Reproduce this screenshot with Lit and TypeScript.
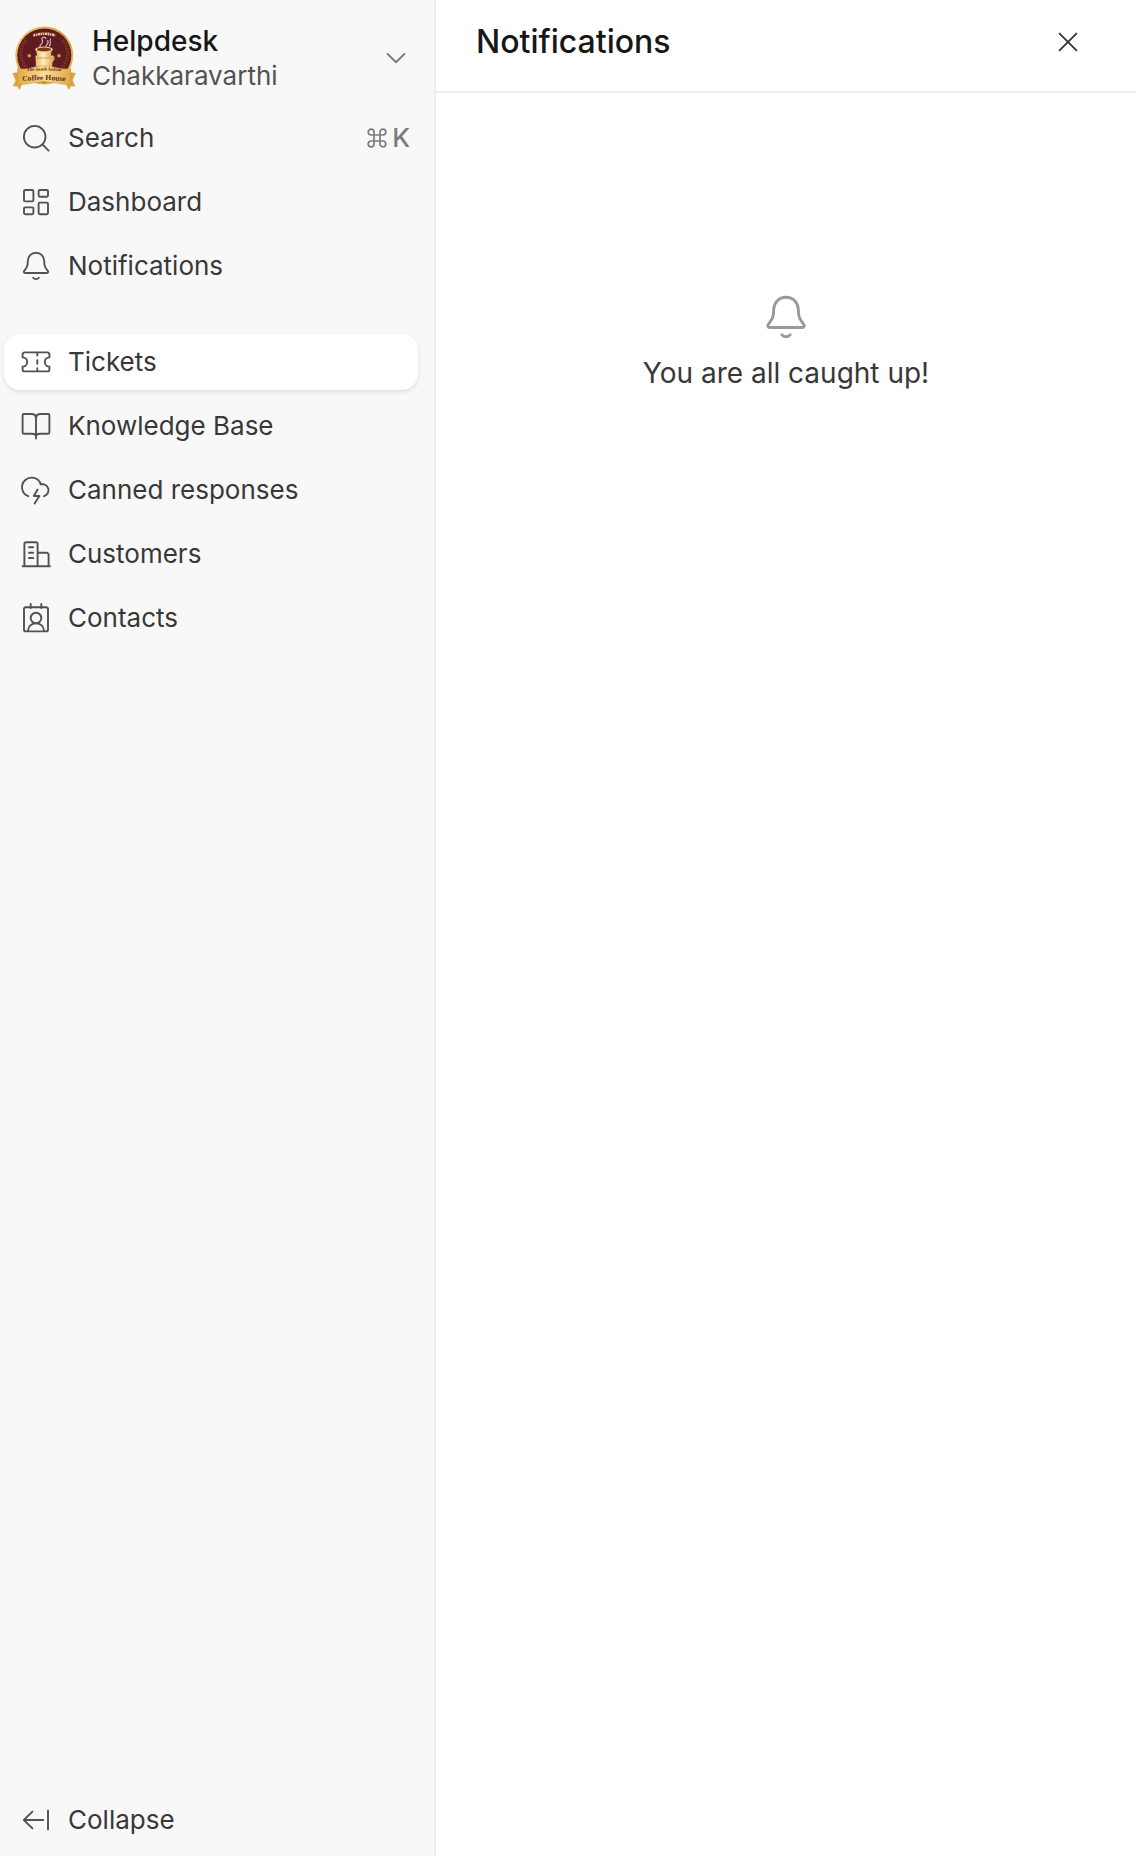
import { LitElement, html, svg, css, SVGTemplateResult } from "lit";
import { customElement, property } from "lit/decorators.js";

const icons: Record<string, SVGTemplateResult> = {
  search: svg`<circle cx="14.7" cy="14.7" r="10.8"/><path d="M22.4 22.4 28.6 28.6"/>`,
  dashboard: svg`<rect x="4" y="4" width="9.4" height="11.4" rx="1.2"/><rect x="18.6" y="4" width="9.4" height="6.8" rx="1.2"/><rect x="4" y="21.4" width="9.4" height="6.8" rx="1.2"/><rect x="18.6" y="16.6" width="9.4" height="11.6" rx="1.2"/>`,
  bell: svg`<path d="M16 2.8C11.2 2.8 8 6.3 7.8 11L7.6 14.2C7.4 17.2 6 18.6 4.6 20.3C3.3 21.8 3.9 23 5.2 23H26.8C28.1 23 28.7 21.8 27.4 20.3C26 18.6 24.6 17.2 24.4 14.2L24.2 11C24 6.3 20.8 2.8 16 2.8Z"/><path d="M13.2 27.8C14.4 29.6 17.6 29.6 18.8 27.8"/>`,
  ticket: svg`<path d="M4.6 6.4H27.4A2 2 0 0 1 29.4 8.4V11.4A4.6 4.6 0 0 0 29.4 20.6V23.4A2 2 0 0 1 27.4 25.4H4.6A2 2 0 0 1 2.6 23.4V20.6A4.6 4.6 0 0 0 2.6 11.4V8.4A2 2 0 0 1 4.6 6.4Z"/><path d="M17.3 7V9.6M17.3 14.2V17.8M17.3 22.2V24.8"/>`,
  book: svg`<path d="M16 28.6V8.4C16 5.6 14 4 11.4 4H4A1.4 1.4 0 0 0 2.6 5.4V22.4A1.4 1.4 0 0 0 4 23.8H11.8C14.2 23.8 16 24.6 16 26.6C16 24.6 17.8 23.8 20.2 23.8H28A1.4 1.4 0 0 0 29.4 22.4V5.4A1.4 1.4 0 0 0 28 4H20.6C18 4 16 5.6 16 8.4"/>`,
  cloud: svg`<path d="M8.2 22.2A9.6 9.6 0 1 1 20.8 10.4A6 6 0 0 1 24 22.2M20.6 10.4H23.6"/><path d="M17.6 15.6 13.8 22H19.4L14.6 29.4"/>`,
  building: svg`<path d="M2.6 28.2H30"/><path d="M4.4 28V6A1.8 1.8 0 0 1 6.2 4.2H15.8A1.8 1.8 0 0 1 17.6 6V28M17.6 14.8H26.6A2 2 0 0 1 28.6 16.8V28M9 9.3H13.2M9 14.7H13.2M9 20H13.2"/>`,
  contact: svg`<rect x="4" y="5.2" width="24" height="24.2" rx="2"/><path d="M10.7 2V6M21.3 2V6"/><circle cx="16" cy="16" r="5.3"/><path d="M8 28.8C8.4 24.4 11.4 21.4 16 21.4S23.6 24.4 24 28.8"/>`,
  collapse: svg`<path d="M23.2 16H3.8M12.4 7.6 3.8 16 12.4 24.4M28 6.4V25.6"/>`,
  chevron: svg`<path d="M7.6 12 16 20.2 24.4 12"/>`,
  close: svg`<path d="M7.6 7.6 24.4 24.4M24.4 7.6 7.6 24.4"/>`,
  command: svg`<path stroke-width="1.7" d="M14 13H20V19H14ZM14 13H11.1A2.9 2.9 0 1 1 14 10.1ZM20 13V10.1A2.9 2.9 0 1 1 22.9 13ZM20 19H22.9A2.9 2.9 0 1 1 20 21.9ZM14 19V21.9A2.9 2.9 0 1 1 11.1 19Z"/>`,
};

@customElement("line-icon")
export class LineIcon extends LitElement {
  @property() name = "";

  static styles = css`
    :host {
      display: block;
      flex: none;
      width: 32px;
      height: 32px;
    }
    .glyph {
      display: block;
      width: 100%;
      height: 100%;
      fill: none;
      stroke: currentColor;
      stroke-width: 1.9;
      stroke-linecap: round;
      stroke-linejoin: round;
    }
  `;

  render() {
    return html`<svg class="glyph" viewBox="0 0 32 32" aria-hidden="true">${icons[this.name]}</svg>`;
  }
}

@customElement("coffee-logo")
export class CoffeeLogo extends LitElement {
  static styles = css`
    :host {
      display: block;
      flex: none;
      width: 64px;
      height: 64px;
    }
    .art {
      display: block;
      width: 100%;
      height: 100%;
      overflow: visible;
    }
    .word {
      font-family: "Liberation Serif", serif;
      font-weight: 700;
      text-anchor: middle;
    }
  `;

  render() {
    return html`
      <svg class="art" viewBox="0 0 64 64" aria-hidden="true">
        <defs>
          <linearGradient id="gold" x1="0" y1="0" x2="1" y2="1">
            <stop offset="0" stop-color="#f6d878" />
            <stop offset="0.5" stop-color="#d09a3c" />
            <stop offset="1" stop-color="#f2cf6c" />
          </linearGradient>
          <linearGradient id="band" x1="0" y1="0" x2="1" y2="0">
            <stop offset="0" stop-color="#e2aa48" />
            <stop offset="0.5" stop-color="#f8df94" />
            <stop offset="1" stop-color="#e2aa48" />
          </linearGradient>
          <linearGradient id="cup" x1="0" y1="0" x2="1" y2="0">
            <stop offset="0" stop-color="#e4b866" />
            <stop offset="0.45" stop-color="#fff0c0" />
            <stop offset="1" stop-color="#d9a558" />
          </linearGradient>
          <path id="name-arc" d="M8 45.4Q32 43.8 56 45.4" />
          <path id="house-arc" d="M4 56Q32 52.2 60 56" />
        </defs>
        <circle cx="32.3" cy="29.4" r="29" fill="url(#gold)" />
        <circle cx="32.3" cy="29.4" r="27" fill="#5f1a22" />
        <path d="M14 14C6.5 23 7.5 35 15 42M50.6 14C58 23 57 35 49.6 42" fill="none" stroke="#7a3222" stroke-width="3.4" stroke-dasharray="2 1" />
        <path d="M21.4 9.6Q32.3 5.8 43.2 9.6" fill="none" stroke="#e6cb93" stroke-width="2.6" stroke-dasharray="1.8 0.6 1.2 0.7 2.4 0.5" />
        <path d="M29 22C25 19 33 18 30 13.5C29 11.4 33 10 34 12.6M34 22C32 19 38 18 35.6 14.6M37.2 20C40 17.6 36.8 15 38.6 13" fill="none" stroke="#d9c0bd" stroke-width="1.1" stroke-linecap="round" />
        <circle cx="17.3" cy="29.8" r="1.8" fill="#d39a42" />
        <circle cx="47" cy="29.8" r="1.8" fill="#d39a42" />
        <path d="M23.4 29.6H41.4L40 41H24Z" fill="url(#cup)" />
        <path d="M39.6 30.4Q42.6 30 41.8 33.4Q41.4 35.4 38.8 35.4" fill="none" stroke="#e4bd72" stroke-width="1.2" />
        <path d="M24 23.5H40L38.4 32H25.6Z" fill="url(#cup)" />
        <path d="M25 32H39" stroke="#c98e43" stroke-width="0.8" />
        <ellipse cx="32" cy="23.4" rx="9" ry="2.8" fill="#efce84" />
        <ellipse cx="32" cy="23.4" rx="7.2" ry="1.8" fill="#7b3518" />
        <path d="M0.4 47L10 45.8V58.4L7.6 64L5.4 60.4L0.8 60L3.6 54.5Z" fill="#dba544" />
        <path d="M63.8 47L54.2 45.8V58.4L56.6 64L58.8 60.4L63.4 60L60.6 54.5Z" fill="#dba544" />
        <path d="M5.6 42.4Q13 44 20 41.6Q32 38 44 41.6Q51 44 58.6 42.4V58.4Q50 58.8 43 56.8Q32 54.6 21 56.8Q14 58.8 5.6 58.4Z" fill="url(#band)" stroke="#c88c33" stroke-width="0.5" />
        <text class="word" font-size="4.6" fill="#6a2320"><textPath href="#name-arc" startOffset="50%">The South Indian</textPath></text>
        <text class="word" font-size="7.6" fill="#6a2320"><textPath href="#house-arc" startOffset="50%">Coffee House</textPath></text>
      </svg>
    `;
  }
}

interface NavItem {
  icon: string;
  label: string;
  active?: boolean;
}

const views: NavItem[] = [
  { icon: "ticket", label: "Tickets", active: true },
  { icon: "book", label: "Knowledge Base" },
  { icon: "cloud", label: "Canned responses" },
  { icon: "building", label: "Customers" },
  { icon: "contact", label: "Contacts" },
];

@customElement("app-root")
export class AppRoot extends LitElement {
  static styles = css`
    :host {
      display: flex;
      min-height: 100vh;
      background: #ffffff;
      color: #383838;
      font-family: Inter, "Liberation Sans", sans-serif;
      font-size: 26px;
      line-height: 32px;
    }
    * {
      box-sizing: border-box;
    }
    button {
      margin: 0;
      border: 0;
      background: none;
      color: inherit;
      font: inherit;
      text-align: left;
      cursor: pointer;
    }
    .sidebar {
      display: flex;
      flex: none;
      flex-direction: column;
      width: 436px;
      padding: 16px 16px 8px 4px;
      border-right: 2px solid #ededed;
      background: #f8f8f8;
    }
    .account {
      display: flex;
      align-items: center;
      gap: 16px;
      height: 84px;
      padding: 0 6px 0 8px;
      margin-bottom: 10px;
    }
    .names {
      display: flex;
      flex: 1;
      flex-direction: column;
      gap: 3px;
      min-width: 0;
    }
    .product {
      color: #171717;
      font-size: 28px;
      font-weight: 500;
    }
    .user {
      color: #525252;
    }
    .muted {
      color: #7c7c7c;
    }
    .group {
      display: flex;
      flex-direction: column;
      gap: 8px;
    }
    .views {
      margin-top: 40px;
    }
    .item {
      display: flex;
      align-items: center;
      gap: 16px;
      width: 100%;
      height: 56px;
      padding: 0 8px 0 16px;
      border-radius: 16px;
      color: #383838;
      text-decoration: none;
    }
    .item line-icon {
      color: #525252;
    }
    .active {
      background: #ffffff;
      box-shadow: 0 2px 4px rgba(0, 0, 0, 0.1);
    }
    .label {
      flex: 1;
    }
    .shortcut {
      display: flex;
      align-items: center;
      color: #7c7c7c;
      font-weight: 500;
    }
    .item .shortcut line-icon {
      color: #7c7c7c;
    }
    .foot {
      margin-top: auto;
    }
    .panel {
      display: flex;
      flex: 1;
      flex-direction: column;
      min-width: 0;
    }
    .panel-head {
      display: flex;
      align-items: center;
      justify-content: space-between;
      height: 93px;
      padding: 0 40px 8px;
      border-bottom: 2px solid #ededed;
    }
    .title {
      margin: 0;
      color: #171717;
      font-size: 32px;
      font-weight: 500;
      line-height: 40px;
    }
    .close {
      padding: 12px;
      color: #383838;
    }
    .empty {
      display: flex;
      flex-direction: column;
      align-items: center;
      gap: 16px;
      padding-top: 200px;
      font-size: 28px;
    }
    .empty p {
      margin: 0;
    }
    .big {
      width: 48px;
      height: 48px;
      color: #999999;
    }
  `;

  private link(item: NavItem) {
    return html`
      <a class="item ${item.active ? "active" : ""}" href="#">
        <line-icon name=${item.icon}></line-icon>
        <span class="label">${item.label}</span>
      </a>
    `;
  }

  render() {
    return html`
      <aside class="sidebar">
        <button class="account">
          <coffee-logo></coffee-logo>
          <span class="names">
            <span class="product">Helpdesk</span>
            <span class="user">Chakkaravarthi</span>
          </span>
          <line-icon class="muted" name="chevron"></line-icon>
        </button>
        <nav class="group">
          <button class="item">
            <line-icon name="search"></line-icon>
            <span class="label">Search</span>
            <span class="shortcut"><line-icon name="command"></line-icon>K</span>
          </button>
          ${this.link({ icon: "dashboard", label: "Dashboard" })}
          <button class="item">
            <line-icon name="bell"></line-icon>
            <span class="label">Notifications</span>
          </button>
        </nav>
        <nav class="group views">${views.map((v) => this.link(v))}</nav>
        <button class="item foot">
          <line-icon name="collapse"></line-icon>
          <span class="label">Collapse</span>
        </button>
      </aside>
      <main class="panel">
        <header class="panel-head">
          <h1 class="title">Notifications</h1>
          <button class="close" aria-label="Close"><line-icon name="close"></line-icon></button>
        </header>
        <section class="empty">
          <line-icon class="big" name="bell"></line-icon>
          <p>You are all caught up!</p>
        </section>
      </main>
    `;
  }
}
